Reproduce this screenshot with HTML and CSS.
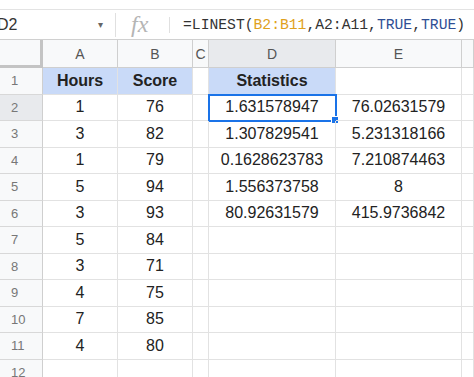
FILE: index.html
```html
<!DOCTYPE html>
<html lang="en">
<head>
    <meta charset="UTF-8">
    <title>LINEST</title>
    <link rel="stylesheet" href="styles.css">
</head>
<body>
    <div class="formula-bar">
        <div class="name-box">D2</div>
        <div class="drop">&#9662;</div>
        <div class="sep"></div>
        <div class="fx">fx</div>
        <div class="sep short"></div>
        <div class="formula">=LINEST(<span class="rng">B2:B11</span>,A2:A11,<span class="bool">TRUE</span>,<span class="bool">TRUE</span>)</div>
    </div>

    <div class="sheet">
        <div class="corner"></div>
        <div class="col-head">A</div>
        <div class="col-head">B</div>
        <div class="col-head">C</div>
        <div class="col-head active">D</div>
        <div class="col-head">E</div>
        <div class="col-head"></div>

        <div class="row-head">1</div>
        <div class="cell title">Hours</div>
        <div class="cell title">Score</div>
        <div class="cell"></div>
        <div class="cell title">Statistics</div>
        <div class="cell"></div>
        <div class="cell"></div>

        <div class="row-head active">2</div>
        <div class="cell">1</div>
        <div class="cell">76</div>
        <div class="cell"></div>
        <div class="cell selected">1.631578947<span class="handle"></span></div>
        <div class="cell">76.02631579</div>
        <div class="cell"></div>

        <div class="row-head">3</div>
        <div class="cell">3</div>
        <div class="cell">82</div>
        <div class="cell"></div>
        <div class="cell">1.307829541</div>
        <div class="cell">5.231318166</div>
        <div class="cell"></div>

        <div class="row-head">4</div>
        <div class="cell">1</div>
        <div class="cell">79</div>
        <div class="cell"></div>
        <div class="cell">0.1628623783</div>
        <div class="cell">7.210874463</div>
        <div class="cell"></div>

        <div class="row-head">5</div>
        <div class="cell">5</div>
        <div class="cell">94</div>
        <div class="cell"></div>
        <div class="cell">1.556373758</div>
        <div class="cell">8</div>
        <div class="cell"></div>

        <div class="row-head">6</div>
        <div class="cell">3</div>
        <div class="cell">93</div>
        <div class="cell"></div>
        <div class="cell">80.92631579</div>
        <div class="cell">415.9736842</div>
        <div class="cell"></div>

        <div class="row-head">7</div>
        <div class="cell">5</div>
        <div class="cell">84</div>
        <div class="cell"></div>
        <div class="cell"></div>
        <div class="cell"></div>
        <div class="cell"></div>

        <div class="row-head">8</div>
        <div class="cell">3</div>
        <div class="cell">71</div>
        <div class="cell"></div>
        <div class="cell"></div>
        <div class="cell"></div>
        <div class="cell"></div>

        <div class="row-head">9</div>
        <div class="cell">4</div>
        <div class="cell">75</div>
        <div class="cell"></div>
        <div class="cell"></div>
        <div class="cell"></div>
        <div class="cell"></div>

        <div class="row-head">10</div>
        <div class="cell">7</div>
        <div class="cell">85</div>
        <div class="cell"></div>
        <div class="cell"></div>
        <div class="cell"></div>
        <div class="cell"></div>

        <div class="row-head">11</div>
        <div class="cell">4</div>
        <div class="cell">80</div>
        <div class="cell"></div>
        <div class="cell"></div>
        <div class="cell"></div>
        <div class="cell"></div>

        <div class="row-head">12</div>
        <div class="cell"></div>
        <div class="cell"></div>
        <div class="cell"></div>
        <div class="cell"></div>
        <div class="cell"></div>
        <div class="cell"></div>
    </div>
</body>
</html>
```

FILE: styles.css
```css
body {
    margin: 0;
    padding-top: 9px;
    background: #fff;
    font-family: "Liberation Sans", Arial, sans-serif;
    color: #222;
    overflow: hidden;
}

/* formula bar */
.formula-bar {
    display: flex;
    align-items: center;
    height: 29px;
    border-top: 1px solid #e3e3e3;
    border-bottom: 1px solid #d0d0d0;
}

.name-box {
    width: 101px;
    margin-left: -3px;
    font-size: 16px;
    color: #333;
}

.drop {
    width: 17px;
    font-size: 10px;
    color: #666;
}

.sep {
    width: 1px;
    height: 24px;
    background: #e0e0e0;
}

.sep.short {
    height: 16px;
}

.fx {
    width: 53px;
    padding-left: 15px;
    box-sizing: border-box;
    font-family: "Liberation Serif", serif;
    font-style: italic;
    font-size: 24px;
    color: #b5b5b5;
}

.formula {
    padding-left: 13px;
    font-family: "Liberation Mono", monospace;
    font-size: 14.7px;
    color: #333;
    white-space: nowrap;
}

.rng {
    color: #e0a11b;
}

.bool {
    color: #2f4f95;
}

/* grid */
.sheet {
    display: grid;
    grid-template-columns: 43px 75px 75px 16px 127px 126px 1fr;
    grid-template-rows: 28px;
    grid-auto-rows: 26.5px;
}

.corner {
    background: #f8f9fa;
    border-right: 3px solid #c4c4c4;
    border-bottom: 3px solid #c4c4c4;
}

.col-head {
    display: flex;
    align-items: center;
    justify-content: center;
    background: #f8f9fa;
    border-right: 1px solid #cfcfcf;
    border-bottom: 1px solid #cfcfcf;
    font-size: 14px;
    color: #555;
}

.row-head {
    display: flex;
    align-items: center;
    padding-left: 11px;
    background: #f8f9fa;
    border-right: 1px solid #cfcfcf;
    border-bottom: 1px solid #d8d8d8;
    font-size: 13px;
    color: #777;
}

.col-head.active,
.row-head.active {
    background: #e8eaed;
}

.cell {
    position: relative;
    display: flex;
    align-items: center;
    justify-content: center;
    border-right: 1px solid #e2e2e2;
    border-bottom: 1px solid #e2e2e2;
    font-size: 16px;
    white-space: nowrap;
}

.cell.title {
    background: #c9daf8;
    font-weight: bold;
}

.cell.selected {
    outline: 2px solid #1a73e8;
    outline-offset: -1px;
}

.handle {
    position: absolute;
    right: -4px;
    bottom: -4px;
    width: 6px;
    height: 6px;
    background: #1a73e8;
    border: 1px solid #fff;
}
```
